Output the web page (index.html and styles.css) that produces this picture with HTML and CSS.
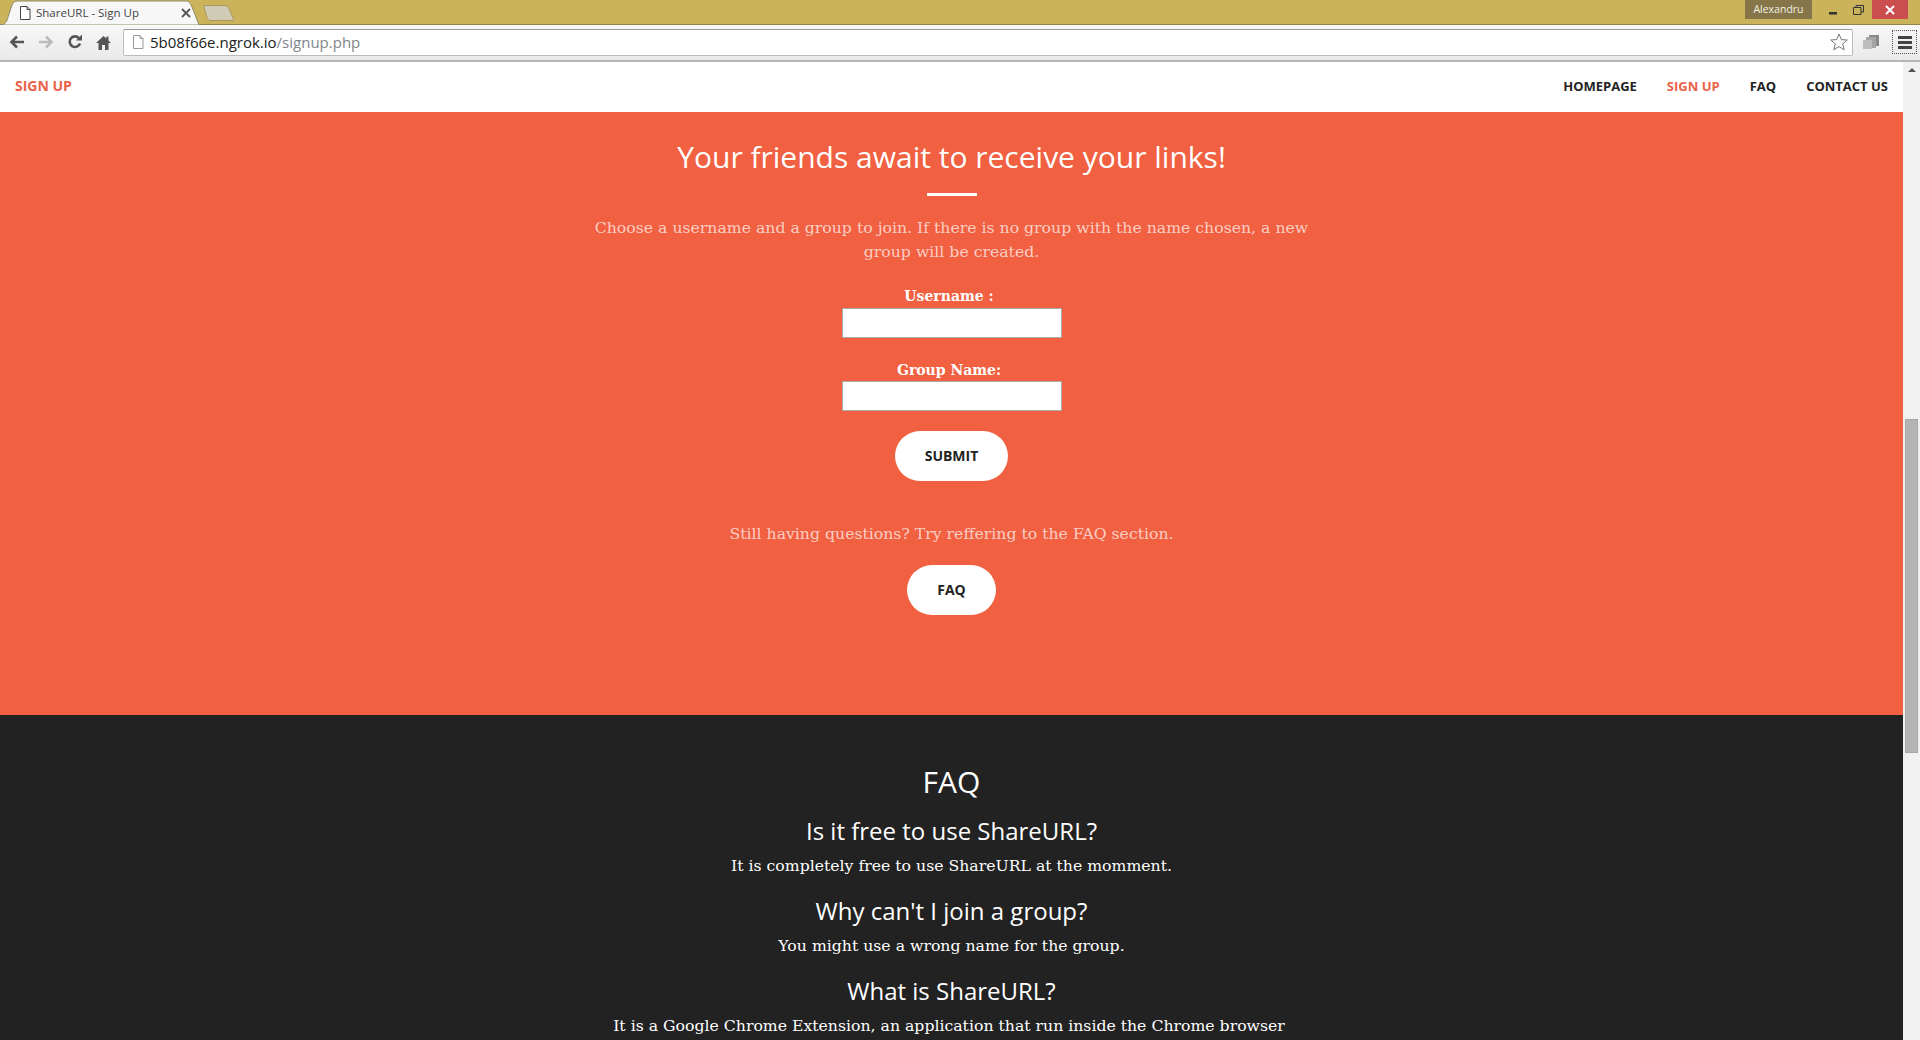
FILE: index.html

```html
<!DOCTYPE html>
<html lang="en">
<head>
  <meta charset="UTF-8" />
  <title>ShareURL - Sign Up</title>
  <link rel="stylesheet" href="styles.css">
</head>
<body>
  <div class="chrome">
    <div class="titlebar">
      <div class="tab">
        <svg class="tab-shape" width="200" height="25" viewBox="0 0 200 25"><path d="M0 25C6 25 7 21 9 14L12 5C13 2 15 1 18 1H186C189 1 190 3 192 7L199 25Z" fill="#f7f7f7" stroke="#8f8a6a" stroke-width="1"/></svg>
        <svg class="tab-page" width="12" height="14" viewBox="0 0 12 14"><path d="M1.500.5H8L11 3.500V13.500H1.500Z" fill="#fff" stroke="#444"/><path d="M8 .5V3.500H11" fill="none" stroke="#444"/></svg>
        <span class="tab-title">ShareURL - Sign Up</span>
        <svg class="tab-close" width="10" height="10" viewBox="0 0 10 10"><path d="M1 1L9 9M9 1L1 9" stroke="#555" stroke-width="1.800"/></svg>
      </div>
      <svg class="newtab" width="32" height="16" viewBox="0 0 32 16"><path d="M.5 .5H22C24 .5 25 1.500 26 3.500L31 15.500H8C6 15.500 5 14.500 4 12.500Z" fill="#cfcbb4" stroke="#a89a5c"/></svg>
      <div class="window-btns">
        <span class="profile">Alexandru</span>
        <svg class="win-icon" width="10" height="10" viewBox="0 0 10 10"><rect x="1" y="7" width="8" height="2.500" fill="#333"/></svg>
        <svg class="win-icon win-restore" width="11" height="10" viewBox="0 0 11 10"><path d="M.5 2.500H8V9.500H.5ZM3 2.500V.5H10.500V7H8" fill="none" stroke="#333"/></svg>
        <span class="win-close"><svg width="10" height="10" viewBox="0 0 10 10"><path d="M1 1L9 9M9 1L1 9" stroke="#fff" stroke-width="2"/></svg></span>
      </div>
    </div>
    <div class="toolbar">
      <svg class="tool" width="16" height="14" viewBox="0 0 16 14"><path d="M15 7H3M8 1.500L2.500 7L8 12.500" fill="none" stroke="#555" stroke-width="2.600"/></svg>
      <svg class="tool" width="16" height="14" viewBox="0 0 16 14"><path d="M1 7H13M8 1.500L13.500 7L8 12.500" fill="none" stroke="#bbb" stroke-width="2.600"/></svg>
      <svg class="tool" width="16" height="16" viewBox="0 0 16 16"><path d="M13 9.500A5.300 5.300 0 1 1 11.800 4" fill="none" stroke="#555" stroke-width="2.600"/><path d="M9 6.500H15V.5Z" fill="#555"/></svg>
      <svg class="tool" width="15" height="15" viewBox="0 0 15 15"><path d="M7.500 1L0 8H2.500V15H6V10H9V15H12.500V8H15L12.500 5.500V1.500H10.500V3.500Z" fill="#555"/></svg>
      <div class="omnibox">
        <svg class="omni-page" width="12" height="14" viewBox="0 0 12 14"><path d="M1.500.5H8L11 3.500V13.500H1.500Z" fill="#fff" stroke="#999"/><path d="M8 .5V3.500H11" fill="none" stroke="#999"/></svg>
        <span class="url">5b08f66e.ngrok.io<span class="url-path">/signup.php</span></span>
        <svg class="star" width="18" height="18" viewBox="0 0 18 18"><path d="M9 1L11.300 6.600L17.300 7L12.700 10.900L14.200 16.800L9 13.600L3.800 16.800L5.300 10.900L.7 7L6.700 6.600Z" fill="#fff" stroke="#777"/></svg>
      </div>
      <svg class="ext" width="17" height="16" viewBox="0 0 17 16"><rect x="6" y="1" width="10" height="11" fill="#888"/><rect x="3" y="3" width="10" height="11" fill="#a5a5a5"/><rect x="0" y="6" width="9" height="9" fill="#bdbdbd"/></svg>
      <div class="menu-btn"><i></i><i></i><i></i></div>
    </div>
  </div>

  <div class="viewport">
    <div class="page">
      <nav class="navbar">
        <a class="brand" href="#">SIGN UP</a>
        <ul class="nav-links">
          <li><a href="#">HOMEPAGE</a></li>
          <li><a class="active" href="#">SIGN UP</a></li>
          <li><a href="#">FAQ</a></li>
          <li><a href="#">CONTACT US</a></li>
        </ul>
      </nav>

      <section class="signup">
        <h2>Your friends await to receive your links!</h2>
        <hr class="divider">
        <p class="lead">Choose a username and a group to join. If there is no group with the name chosen, a new group will be created.</p>
        <form class="signup-form">
          <label for="username">Username :&nbsp;</label>
          <input type="text" id="username">
          <label for="group" class="second">Group Name:&nbsp;</label>
          <input type="text" id="group">
          <button type="button" class="pill submit">SUBMIT</button>
        </form>
        <p class="lead still">Still having questions? Try reffering to the FAQ section.</p>
        <a class="pill faq-btn" href="#">FAQ</a>
      </section>

      <section class="faq">
        <h2>FAQ</h2>
        <h3>Is it free to use ShareURL?</h3>
        <p>It is completely free to use ShareURL at the momment.</p>
        <h3>Why can't I join a group?</h3>
        <p>You might use a wrong name for the group.</p>
        <h3>What is ShareURL?</h3>
        <p>It is a Google Chrome Extension, an application that run inside the Chrome browser&nbsp;</p>
      </section>
    </div>

    <div class="scrollbar">
      <div class="arrow-up"></div>
      <div class="thumb"></div>
    </div>
  </div>
</body>
</html>
```

FILE: styles.css

```css
* {
  box-sizing: border-box;
}
html, body {
  margin: 0;
  height: 1040px;
  overflow: hidden;
}
body {
  font-family: "Open Sans", sans-serif;
  background: #fff;
}

/* browser frame */
.chrome {
  height: 62px;
}
.titlebar {
  height: 25px;
  background: #cbb35b;
  border-bottom: 1px solid #8f8350;
  display: flex;
  align-items: flex-start;
}
.tab {
  position: relative;
  width: 200px;
  height: 25px;
  flex: none;
  display: flex;
  align-items: center;
  padding: 0 9px 0 19px;
}
.tab-shape {
  position: absolute;
  left: 0;
  top: 0;
}
.tab-page, .tab-title, .tab-close {
  position: relative;
}
.tab-title {
  font-size: 11.5px;
  color: #444;
  margin-left: 5px;
  flex: 1;
}
.newtab {
  margin: 5px 0 0 3px;
}
.window-btns {
  margin-left: auto;
  display: flex;
  align-items: flex-start;
  padding-right: 12px;
}
.profile {
  width: 67px;
  height: 19px;
  background: #857548;
  color: #f4f1e2;
  font-size: 10.5px;
  line-height: 18px;
  text-align: center;
}
.win-icon {
  margin: 5px 0 0 16px;
}
.win-restore {
  margin-left: 15px;
}
.win-close {
  width: 36px;
  height: 19px;
  margin-left: 8px;
  background: #cb4e4e;
  display: flex;
  align-items: center;
  justify-content: center;
}
.toolbar {
  height: 37px;
  display: flex;
  align-items: center;
  padding: 0 3px 1px 9px;
  background: linear-gradient(#f8f8f8, #e9e9e9);
  border-bottom: 2px solid #b5b5b5;
}
.tool {
  margin-right: 13px;
  flex: none;
}
.omnibox {
  height: 27px;
  flex: 1;
  margin-left: -1px;
  background: #fff;
  border: 1px solid #bbb;
  border-top-color: #999;
  border-radius: 2px;
  display: flex;
  align-items: center;
  padding: 0 4px 0 8px;
}
.url {
  font-size: 15px;
  color: #222;
  margin-left: 6px;
  flex: 1;
}
.url-path {
  color: #80868b;
}
.ext {
  margin: 0 12px 0 10px;
}
.menu-btn {
  width: 25px;
  height: 24px;
  border: 1px dotted #555;
  display: flex;
  flex-direction: column;
  justify-content: center;
  align-items: center;
  gap: 2px;
}
.menu-btn i {
  width: 14px;
  height: 3px;
  background: #444;
}

/* page */
.viewport {
  display: flex;
  height: 978px;
  overflow: hidden;
}
.page {
  flex: 1;
  min-width: 0;
}
.navbar {
  height: 50px;
  padding: 0 15px 4px;
  display: flex;
  align-items: center;
  justify-content: space-between;
  background: #fff;
}
.navbar a {
  font-size: 13px;
  font-weight: 700;
  text-decoration: none;
  color: #222;
}
.navbar .brand {
  font-size: 14px;
  color: #ea6248;
}
.navbar .active {
  color: #ea6248;
}
.nav-links {
  display: flex;
  gap: 30px;
  list-style: none;
  margin: 0;
  padding: 0;
}

.signup {
  height: 603px;
  background: #f16041;
  padding-top: 25px;
  text-align: center;
  color: #fff;
}
.signup h2 {
  font-size: 30px;
  font-weight: 400;
  line-height: 40px;
  margin: 0;
}
.divider {
  width: 50px;
  height: 3px;
  margin: 16px auto 20px;
  border: 0;
  background: #fff;
}
.lead, .faq p {
  font-family: "DejaVu Serif", serif;
  font-size: 15.7px;
}
.lead {
  width: 730px;
  margin: 0 auto;
  line-height: 24px;
  color: rgba(255, 255, 255, 0.7);
}
.signup-form {
  display: flex;
  flex-direction: column;
  align-items: center;
  margin-top: 20px;
}
.signup label {
  font-family: "DejaVu Serif", serif;
  font-size: 14px;
  font-weight: 700;
  line-height: 24px;
}
.signup label.second {
  height: 23px;
  margin-top: 20px;
}
.signup input {
  width: 220px;
  height: 30px;
  border: 1px solid #aaa;
  background: #fff;
}
.pill {
  display: block;
  height: 50px;
  border: 0;
  border-radius: 25px;
  background: #fff;
  color: #222;
  font-family: "Open Sans", sans-serif;
  font-size: 14px;
  font-weight: 700;
  line-height: 50px;
  text-decoration: none;
  padding: 0;
}
.submit {
  width: 113px;
  margin-top: 20px;
}
.still {
  margin-top: 41px;
}
.faq-btn {
  width: 89px;
  margin: 19px auto 0;
}

.faq {
  height: 325px;
  overflow: hidden;
  background: #222;
  color: #fff;
  padding-top: 47px;
  text-align: center;
}
.faq h2 {
  font-size: 30px;
  font-weight: 400;
  line-height: 40px;
  margin: 0 0 13px;
}
.faq h3 {
  font-size: 24px;
  font-weight: 400;
  line-height: 32px;
  margin: 0;
}
.faq p {
  font-weight: 400;
  line-height: 24px;
  margin: 7px 0 17px;
}

.scrollbar {
  position: relative;
  width: 17px;
  flex: none;
  background: #f1f1f1;
}
.arrow-up {
  position: absolute;
  left: 5px;
  top: 6px;
  border-left: 4px solid transparent;
  border-right: 4px solid transparent;
  border-bottom: 4px solid #505050;
}
.thumb {
  position: absolute;
  left: 2px;
  right: 2px;
  top: 357px;
  height: 334px;
  background: #b4b4b4;
  border: 1px solid #a8a8a8;
}
```
